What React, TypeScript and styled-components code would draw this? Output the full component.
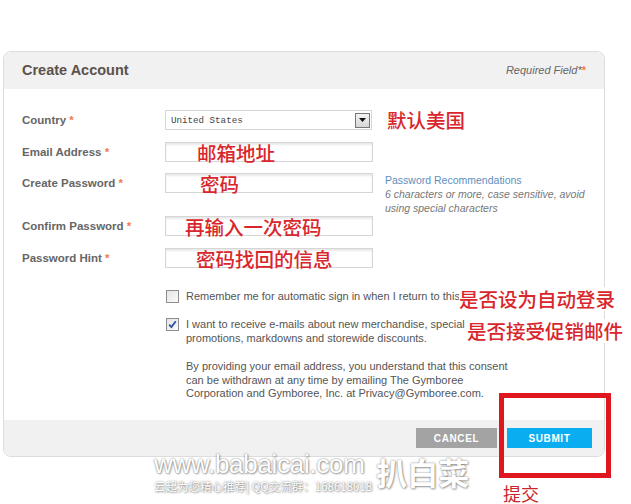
import React from "react"
import styled, { createGlobalStyle } from "styled-components"

const GlobalStyle = createGlobalStyle`
    body {
        margin: 0;
        background: #ffffff;
        font-family: "Liberation Sans", Arial, sans-serif;
    }
`

const cjk = `"Noto Sans CJK SC", "Liberation Sans", sans-serif`
const red = "#d9262c"

const Page = styled.div`
    position: relative;
    width: 631px;
    height: 504px;
    padding-top: 51px;
    padding-left: 3px;
    box-sizing: border-box;
    overflow: hidden;
`

const Card = styled.div`
    width: 602px;
    border: 1px solid #dcdcdc;
    border-radius: 8px;
    overflow: hidden;
    box-sizing: border-box;
    background: #fff;
`

const Header = styled.div`
    height: 37px;
    background: #f1f1f1;
    display: flex;
    align-items: center;
    justify-content: space-between;
    padding: 0 18px 1px 18px;
    box-sizing: border-box;
`

const Title = styled.h2`
    margin: 0;
    font-size: 14.5px;
    font-weight: bold;
    color: #5b524b;
`

const Required = styled.span`
    font-size: 11px;
    font-style: italic;
    color: #666;
`

const Star = styled.span`
    color: #f07a4f;
    font-weight: bold;
    font-style: normal;
`

const Body = styled.div`
    height: 331px;
    padding: 21px 0 0 18px;
    box-sizing: border-box;
`

const Row = styled.div<{ $gap: number }>`
    display: flex;
    align-items: flex-start;
    margin-bottom: ${p => p.$gap}px;
`

const Label = styled.label`
    width: 143px;
    flex-shrink: 0;
    line-height: 20px;
    font-size: 11.5px;
    font-weight: bold;
    color: #666;
`

const Field = styled.div<{ $indent?: number }>`
    width: 208px;
    height: 20px;
    flex-shrink: 0;
    box-sizing: border-box;
    border: 1px solid #d6d6d6;
    box-shadow: inset 0 2px 2px rgba(0, 0, 0, 0.09);
    background: #fff;
    padding-left: ${p => p.$indent ?? 0}px;
    font-family: ${cjk};
    font-size: 19.5px;
    font-weight: 500;
    line-height: 20px;
    color: ${red};
    white-space: nowrap;
`

const Select = styled.div`
    width: 207px;
    height: 20px;
    box-sizing: border-box;
    border: 1px solid #d6d6d6;
    display: flex;
    align-items: center;
    justify-content: space-between;
    padding-left: 5px;
    font-family: "Liberation Mono", "DejaVu Sans Mono", monospace;
    font-size: 9.2px;
    color: #444;
`

const ArrowBtn = styled.span`
    width: 15px;
    height: 15px;
    margin-right: 1px;
    box-sizing: border-box;
    border: 1px solid #777;
    background: linear-gradient(#f4f4f4, #d6d6d6);
    display: flex;
    align-items: center;
    justify-content: center;
`

const Aside = styled.div`
    margin-left: 15px;
    font-family: ${cjk};
    font-size: 19.5px;
    font-weight: 500;
    line-height: 20px;
    color: ${red};
`

const Note = styled.div`
    margin-left: 12px;
    font-size: 10.5px;
    line-height: 14px;
    color: #777;
`

const NoteTitle = styled.div`
    color: #5b8fbf;
`

const NoteText = styled.div`
    font-style: italic;
`

const Checks = styled.div`
    padding-left: 144px;
    margin-top: 21px;
`

const CheckRow = styled.div<{ $gap: number }>`
    display: flex;
    align-items: flex-start;
    gap: 7px;
    margin-bottom: ${p => p.$gap}px;
`

const Box = styled.span`
    width: 13px;
    height: 13px;
    flex-shrink: 0;
    margin-top: 0.5px;
    box-sizing: border-box;
    border: 1px solid #8e8e8e;
    background: linear-gradient(135deg, #e4e4e4, #fbfbfb);
    display: flex;
    align-items: center;
    justify-content: center;
`

const CheckText = styled.div`
    font-size: 11px;
    line-height: 14px;
    color: #555;
`

const Consent = styled.p`
    margin: 15px 0 0 20px;
    font-size: 11px;
    line-height: 13.5px;
    color: #555;
`

const Footer = styled.div`
    height: 36px;
    background: #f1f1f1;
    display: flex;
    align-items: center;
    justify-content: flex-end;
    gap: 10px;
    padding-right: 12px;
`

const Button = styled.button<{ $primary?: boolean }>`
    height: 20px;
    width: ${p => (p.$primary ? 85 : 81)}px;
    border: none;
    padding: 0;
    background: ${p => (p.$primary ? "#0aaef0" : "#a3a3a3")};
    color: #fff;
    font-family: "Liberation Sans", Arial, sans-serif;
    font-size: 10px;
    font-weight: bold;
    letter-spacing: 0.6px;
`

const Callout = styled.div<{ $x: number; $y: number }>`
    position: absolute;
    left: ${p => p.$x}px;
    top: ${p => p.$y}px;
    font-family: ${cjk};
    font-size: 19.5px;
    font-weight: 500;
    line-height: 24px;
    color: ${red};
    background: #fff;
    white-space: nowrap;
`

const Frame = styled.div`
    position: absolute;
    left: 499px;
    top: 393px;
    width: 112px;
    height: 85px;
    box-sizing: border-box;
    border: 5px solid #e0161f;
`

const Submit = styled.div`
    position: absolute;
    left: 503px;
    top: 484px;
    font-family: ${cjk};
    font-size: 18px;
    line-height: 18px;
    color: #c8262c;
`

const Watermark = styled.div`
    position: absolute;
    left: 154px;
    top: 452px;
    display: flex;
    align-items: center;
    gap: 4px;
    color: #fff;
    text-shadow: 0 0 2px rgba(0, 0, 0, 0.5), 1px 1px 2px rgba(0, 0, 0, 0.3);
`

const Site = styled.div`
    display: flex;
    flex-direction: column;
    gap: 3px;
`

const SiteUrl = styled.div`
    font-size: 26px;
    line-height: 25px;
    letter-spacing: -0.3px;
`

const SiteLine = styled.div`
    font-family: ${cjk};
    font-size: 11.5px;
    line-height: 12px;
`

const SiteName = styled.div`
    font-family: ${cjk};
    font-size: 31px;
    font-weight: bold;
    line-height: 36px;
`

const Req = () => <Star> *</Star>

export default function App() {
    return (
        <Page>
            <GlobalStyle />
            <Card>
                <Header>
                    <Title>Create Account</Title>
                    <Required>Required Field*<Star>*</Star></Required>
                </Header>
                <Body>
                    <Row $gap={12}>
                        <Label>Country<Req /></Label>
                        <Select>
                            United States
                            <ArrowBtn>
                                <svg width="7" height="4" viewBox="0 0 7 4"><path d="M0 0h7L3.5 4z" fill="#111" /></svg>
                            </ArrowBtn>
                        </Select>
                        <Aside>默认美国</Aside>
                    </Row>
                    <Row $gap={11}>
                        <Label>Email Address<Req /></Label>
                        <Field $indent={31}>邮箱地址</Field>
                    </Row>
                    <Row $gap={1}>
                        <Label>Create Password<Req /></Label>
                        <Field $indent={34}>密码</Field>
                        <Note>
                            <NoteTitle>Password Recommendations</NoteTitle>
                            <NoteText>6 characters or more, case sensitive, avoid<br />using special characters</NoteText>
                        </Note>
                    </Row>
                    <Row $gap={12}>
                        <Label>Confirm Password<Req /></Label>
                        <Field $indent={19}>再输入一次密码</Field>
                    </Row>
                    <Row $gap={0}>
                        <Label>Password Hint<Req /></Label>
                        <Field $indent={30}>密码找回的信息</Field>
                    </Row>
                    <Checks>
                        <CheckRow $gap={14}>
                            <Box />
                            <CheckText>Remember me for automatic sign in when I return to this site.</CheckText>
                        </CheckRow>
                        <CheckRow $gap={0}>
                            <Box>
                                <svg width="9" height="9" viewBox="0 0 9 9"><path d="M1.2 4.6l2.2 2.4L7.8 1.2" stroke="#2c4f9e" strokeWidth="1.8" fill="none" /></svg>
                            </Box>
                            <CheckText>I want to receive e-mails about new merchandise, special<br />promotions, markdowns and storewide discounts.</CheckText>
                        </CheckRow>
                        <Consent>
                            By providing your email address, you understand that this consent<br />
                            can be withdrawn at any time by emailing The Gymboree<br />
                            Corporation and Gymboree, Inc. at Privacy@Gymboree.com.
                        </Consent>
                    </Checks>
                </Body>
                <Footer>
                    <Button>CANCEL</Button>
                    <Button $primary>SUBMIT</Button>
                </Footer>
            </Card>
            <Callout $x={459} $y={287}>是否设为自动登录</Callout>
            <Callout $x={467} $y={319}>是否接受促销邮件</Callout>
            <Frame />
            <Submit>提交</Submit>
            <Watermark>
                <Site>
                    <SiteUrl>www.babaicai.com</SiteUrl>
                    <SiteLine>云起为您精心推荐| QQ交流群：168618018</SiteLine>
                </Site>
                <SiteName>扒白菜</SiteName>
            </Watermark>
        </Page>
    )
}
